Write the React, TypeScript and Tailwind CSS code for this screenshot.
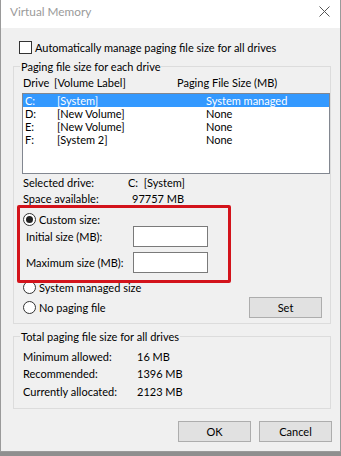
import React from "react";

const F = { fontFamily: "Lato, 'Liberation Sans', sans-serif" };

function Radio({ checked = false }: { checked?: boolean }) {
  return (
    <span className="w-[13px] h-[13px] rounded-full border border-[#333] bg-white flex items-center justify-center shrink-0">
      {checked && <span className="w-[7px] h-[7px] rounded-full bg-[#222]" />}
    </span>
  );
}

function Btn({ children }: { children: React.ReactNode }) {
  return (
    <div className="w-[73px] h-[21px] bg-[#e1e1e1] border border-[#adadad] flex items-center justify-center text-[11px] text-black">
      {children}
    </div>
  );
}

export default function App() {
  const rows = [
    { d: "C:", v: "[System]", s: "System managed", sel: true },
    { d: "D:", v: "[New Volume]", s: "None" },
    { d: "E:", v: "[New Volume]", s: "None" },
    { d: "F:", v: "[System 2]", s: "None" },
  ];
  return (
    <div className="relative w-[341px] h-[456px] bg-[#8f8f8f] overflow-hidden text-[11px] text-black leading-[13px]" style={F}>
      <div className="w-[341px] h-[452px] border-x border-b border-[#9a9a9a] bg-[#f0f0f0] flex flex-col">
        {/* title bar */}
        <div className="h-[28px] bg-white flex items-start shrink-0">
          <span className="ml-[9px] mt-[5px] text-[11.8px] leading-[14px] text-[#9a9a9a]">Virtual Memory</span>
          <svg className="ml-auto mr-[10px] mt-[6px]" width="11" height="11" viewBox="0 0 11 11">
            <path d="M0.5 0.5 L10.5 10.5 M10.5 0.5 L0.5 10.5" stroke="#555" strokeWidth="1" fill="none" />
          </svg>
        </div>

        {/* checkbox */}
        <div className="mt-[13px] ml-[18px] h-[13px] flex items-center">
          <span className="w-[13px] h-[13px] border border-[#333] bg-white shrink-0" />
          <span className="ml-[3px]">Automatically manage paging file size for all drives</span>
        </div>

        {/* group 1 */}
        <div className="mt-[12px] ml-[12px] w-[318px] h-[258px] border border-[#dcdcdc] flex flex-col">
          <span className="-mt-[7px] ml-[6px] px-[1px] self-start bg-[#f0f0f0] h-[14px] leading-[14px]">Paging file size for each drive</span>
          <div className="mt-[2px] ml-[9px] h-[14px] leading-[14px] flex">
            <span className="w-[31px]">Drive</span>
            <span className="w-[123px]">[Volume Label]</span>
            <span>Paging File Size (MB)</span>
          </div>
          <div className="mt-[3px] ml-[8px] w-[308px] h-[81px] border border-[#828790] bg-white flex flex-col">
            {rows.map((r) => (
              <div
                key={r.d}
                className={
                  "h-[13px] flex items-center pl-[2px] leading-[13px] " +
                  (r.sel ? "bg-[#3399ff] text-white" : "")
                }
              >
                <span className="w-[32px]">{r.d}</span>
                <span className="w-[149px]">{r.v}</span>
                <span>{r.s}</span>
              </div>
            ))}
          </div>
          <div className="mt-[2px] ml-[9px] h-[14px] leading-[14px] flex">
            <span className="w-[105px]">Selected drive:</span>
            <span>C:&nbsp;&nbsp;[System]</span>
          </div>
          <div className="mt-[2px] ml-[9px] h-[14px] leading-[14px] flex">
            <span className="w-[109px]">Space available:</span>
            <span>97757 MB</span>
          </div>
          <div className="mt-[7px] ml-[9px] h-[13px] flex items-center">
            <Radio checked />
            <span className="ml-[3px]">Custom size:</span>
          </div>
          <div className="ml-[12px] h-[21px] flex items-center">
            <span className="w-[107px]">Initial size (MB):</span>
            <span className="w-[75px] h-[21px] border border-[#7a7a7a] bg-white" />
          </div>
          <div className="mt-[5px] ml-[12px] h-[21px] flex items-center">
            <span className="w-[107px]">Maximum size (MB):</span>
            <span className="w-[75px] h-[21px] border border-[#7a7a7a] bg-white" />
          </div>
          <div className="mt-[8px] ml-[9px] h-[13px] flex items-center">
            <Radio />
            <span className="ml-[3px]">System managed size</span>
          </div>
          <div className="mt-[3px] ml-[9px] mr-[8px] h-[21px] flex items-center">
            <Radio />
            <span className="ml-[3px]">No paging file</span>
            <div className="ml-auto">
              <Btn>Set</Btn>
            </div>
          </div>
        </div>

        {/* group 2 */}
        <div className="mt-[12px] ml-[12px] w-[318px] h-[73px] border border-[#dcdcdc] flex flex-col">
          <span className="-mt-[7px] ml-[6px] px-[1px] self-start bg-[#f0f0f0] h-[14px] leading-[14px]">Total paging file size for all drives</span>
          <div className="mt-[6px] ml-[9px] h-[14px] leading-[14px] flex">
            <span className="w-[114px]">Minimum allowed:</span>
            <span>16 MB</span>
          </div>
          <div className="mt-[3px] ml-[9px] h-[14px] leading-[14px] flex">
            <span className="w-[114px]">Recommended:</span>
            <span>1396 MB</span>
          </div>
          <div className="mt-[4px] ml-[9px] h-[14px] leading-[14px] flex">
            <span className="w-[114px]">Currently allocated:</span>
            <span>2123 MB</span>
          </div>
        </div>

        {/* buttons */}
        <div className="mt-[12px] mr-[8px] flex justify-end gap-[8px]">
          <Btn>OK</Btn>
          <Btn>Cancel</Btn>
        </div>
      </div>

      {/* red highlight */}
      <div className="absolute left-[17px] top-[205px] w-[214px] h-[78px] border-[3px] border-[#d3131b] rounded-[2px]" />
    </div>
  );
}
